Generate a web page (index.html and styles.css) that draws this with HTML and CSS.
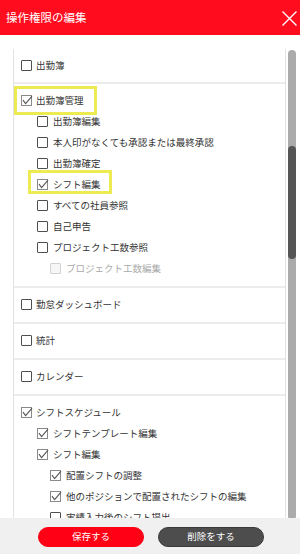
FILE: index.html
```html
<!DOCTYPE html>
<html lang="ja">
<head>
<meta charset="utf-8">
<title>操作権限の編集</title>
<link rel="stylesheet" href="styles.css">
</head>
<body>
<div class="app">
  <header class="hdr">
    <h1 class="title">操作権限の編集</h1>
    <button class="close" aria-label="閉じる">
      <svg width="15" height="15" viewBox="0 0 15 15"><path d="M0.5 0.5 L14.5 14.5 M14.5 0.5 L0.5 14.5" stroke="#fff" stroke-width="1.4" fill="none"/></svg>
    </button>
  </header>
  <main class="main">
    <div class="list">
      <section class="grp first">
        <div class="item l1"><span class="cb"></span><span class="lbl">出勤簿</span></div>
      </section>
      <section class="grp">
        <div class="item l1"><span class="hl hl1"></span><span class="cb on"><svg viewBox="0 0 11 11"><rect x="0.5" y="0.5" width="10" height="10" fill="none" stroke="#8a8a8a"/><path d="M2 5.2 L4.6 8.6 L11 1.2" fill="none" stroke="#555" stroke-width="1.1"/></svg></span><span class="lbl">出勤簿管理</span></div>
        <div class="item l2"><span class="cb"></span><span class="lbl">出勤簿編集</span></div>
        <div class="item l2"><span class="cb"></span><span class="lbl">本人印がなくても承認または最終承認</span></div>
        <div class="item l2"><span class="cb"></span><span class="lbl">出勤簿確定</span></div>
        <div class="item l2"><span class="hl hl2"></span><span class="cb on"><svg viewBox="0 0 11 11"><rect x="0.5" y="0.5" width="10" height="10" fill="none" stroke="#8a8a8a"/><path d="M2 5.2 L4.6 8.6 L11 1.2" fill="none" stroke="#555" stroke-width="1.1"/></svg></span><span class="lbl">シフト編集</span></div>
        <div class="item l2"><span class="cb"></span><span class="lbl">すべての社員参照</span></div>
        <div class="item l2"><span class="cb"></span><span class="lbl">自己申告</span></div>
        <div class="item l2"><span class="cb"></span><span class="lbl">プロジェクト工数参照</span></div>
        <div class="item l3 disabled"><span class="cb"></span><span class="lbl">プロジェクト工数編集</span></div>
      </section>
      <section class="grp">
        <div class="item l1"><span class="cb"></span><span class="lbl">勤怠ダッシュボード</span></div>
      </section>
      <section class="grp">
        <div class="item l1"><span class="cb"></span><span class="lbl">統計</span></div>
      </section>
      <section class="grp">
        <div class="item l1"><span class="cb"></span><span class="lbl">カレンダー</span></div>
      </section>
      <section class="grp">
        <div class="item l1"><span class="cb on"><svg viewBox="0 0 11 11"><rect x="0.5" y="0.5" width="10" height="10" fill="none" stroke="#8a8a8a"/><path d="M2 5.2 L4.6 8.6 L11 1.2" fill="none" stroke="#555" stroke-width="1.1"/></svg></span><span class="lbl">シフトスケジュール</span></div>
        <div class="item l2"><span class="cb on"><svg viewBox="0 0 11 11"><rect x="0.5" y="0.5" width="10" height="10" fill="none" stroke="#8a8a8a"/><path d="M2 5.2 L4.6 8.6 L11 1.2" fill="none" stroke="#555" stroke-width="1.1"/></svg></span><span class="lbl">シフトテンプレート編集</span></div>
        <div class="item l2"><span class="cb on"><svg viewBox="0 0 11 11"><rect x="0.5" y="0.5" width="10" height="10" fill="none" stroke="#8a8a8a"/><path d="M2 5.2 L4.6 8.6 L11 1.2" fill="none" stroke="#555" stroke-width="1.1"/></svg></span><span class="lbl">シフト編集</span></div>
        <div class="item l3"><span class="cb on"><svg viewBox="0 0 11 11"><rect x="0.5" y="0.5" width="10" height="10" fill="none" stroke="#8a8a8a"/><path d="M2 5.2 L4.6 8.6 L11 1.2" fill="none" stroke="#555" stroke-width="1.1"/></svg></span><span class="lbl">配置シフトの調整</span></div>
        <div class="item l3"><span class="cb on"><svg viewBox="0 0 11 11"><rect x="0.5" y="0.5" width="10" height="10" fill="none" stroke="#8a8a8a"/><path d="M2 5.2 L4.6 8.6 L11 1.2" fill="none" stroke="#555" stroke-width="1.1"/></svg></span><span class="lbl">他のポジションで配置されたシフトの編集</span></div>
        <div class="item l3"><span class="cb"></span><span class="lbl">実績入力後のシフト提出</span></div>
      </section>
    </div>
    <div class="sbar"><div class="thumb"></div></div>
  </main>
  <footer class="ftr">
    <button class="btn save">保存する</button>
    <button class="btn del">削除をする</button>
  </footer>
</div>
</body>
</html>
```
FILE: styles.css
```css
* { box-sizing: border-box; }
html, body { margin: 0; padding: 0; background: #fff; }
body {
  width: 300px;
  height: 554px;
  overflow: hidden;
  font-family: "Noto Sans CJK JP", "Noto Sans", sans-serif;
  color: #333;
}
.app {
  display: flex;
  flex-direction: column;
  height: 554px;
}
.hdr {
  height: 35px;
  flex: none;
  background: #ff0c1f;
  display: flex;
  align-items: center;
  justify-content: space-between;
  padding: 0 3px 0 6px;
}
.title {
  margin: 0;
  font-size: 11.5px;
  font-weight: 400;
  color: #fff;
  line-height: 1;
}
.close {
  border: 0;
  background: none;
  padding: 0;
  width: 15px;
  height: 15px;
  margin-top: 2px;
  display: block;
}
.close svg { display: block; }
.main {
  flex: 1;
  min-height: 0;
  display: flex;
  gap: 2px;
  padding: 14px 4px 0 13px;
  overflow: hidden;
}
.list {
  width: 273px;
  flex: none;
  border-left: 1px solid #e2e2e2;
  border-right: 1px solid #e2e2e2;
  align-self: flex-start;
}
.grp {
  padding: 6px 0 7px;
  border-bottom: 2px solid #ececec;
}
.grp.first { padding-top: 6px; padding-bottom: 6px; }
.item {
  position: relative;
  display: flex;
  align-items: center;
  height: 21px;
  font-size: 9.5px;
  line-height: 1;
  white-space: nowrap;
}
.item.l1 { padding-left: 7px; gap: 4px; }
.item.l2 { padding-left: 23px; gap: 5px; }
.item.l3 { padding-left: 36px; gap: 5px; }
.cb {
  width: 11px;
  height: 11px;
  flex: none;
  border: 1px solid #4f4f4f;
  border-radius: 1px;
  background: #fff;
}
.cb.on {
  border: 0;
  border-radius: 0;
  background: none;
}
.cb svg { display: block; width: 11px; height: 11px; overflow: visible; }
.disabled { color: #aaa; }
.disabled .cb { border-color: #d2d2d2; background: #f6f6f6; }
.hl {
  position: absolute;
  border: 3px solid #ecec52;
  pointer-events: none;
}
.hl1 { left: 0; top: -4px; width: 83px; height: 29px; }
.hl2 { left: 14px; top: -4px; width: 84px; height: 24px; }
.sbar {
  width: 8px;
  flex: none;
  margin-top: 1px;
  height: 470px;
  background: #ababab;
  border-radius: 4px;
  padding-top: 96px;
}
.thumb {
  height: 113px;
  background: #555;
  border-radius: 4px;
}
.ftr {
  height: 36px;
  flex: none;
  background: #f0f0f0;
  display: flex;
  justify-content: center;
  align-items: flex-start;
  gap: 14px;
  padding-top: 9px;
  padding-left: 2px;
}
.btn {
  width: 106px;
  height: 20px;
  border-radius: 10px;
  font-family: "Noto Sans CJK JP", "Noto Sans", sans-serif;
  font-size: 9.5px;
  color: #fff;
  padding: 0;
  line-height: 1;
}
.save { background: #ff0014; border: 1px solid #ff0014; }
.del { background: #4d4d4d; border: 1px solid #3a3a3a; }
```
